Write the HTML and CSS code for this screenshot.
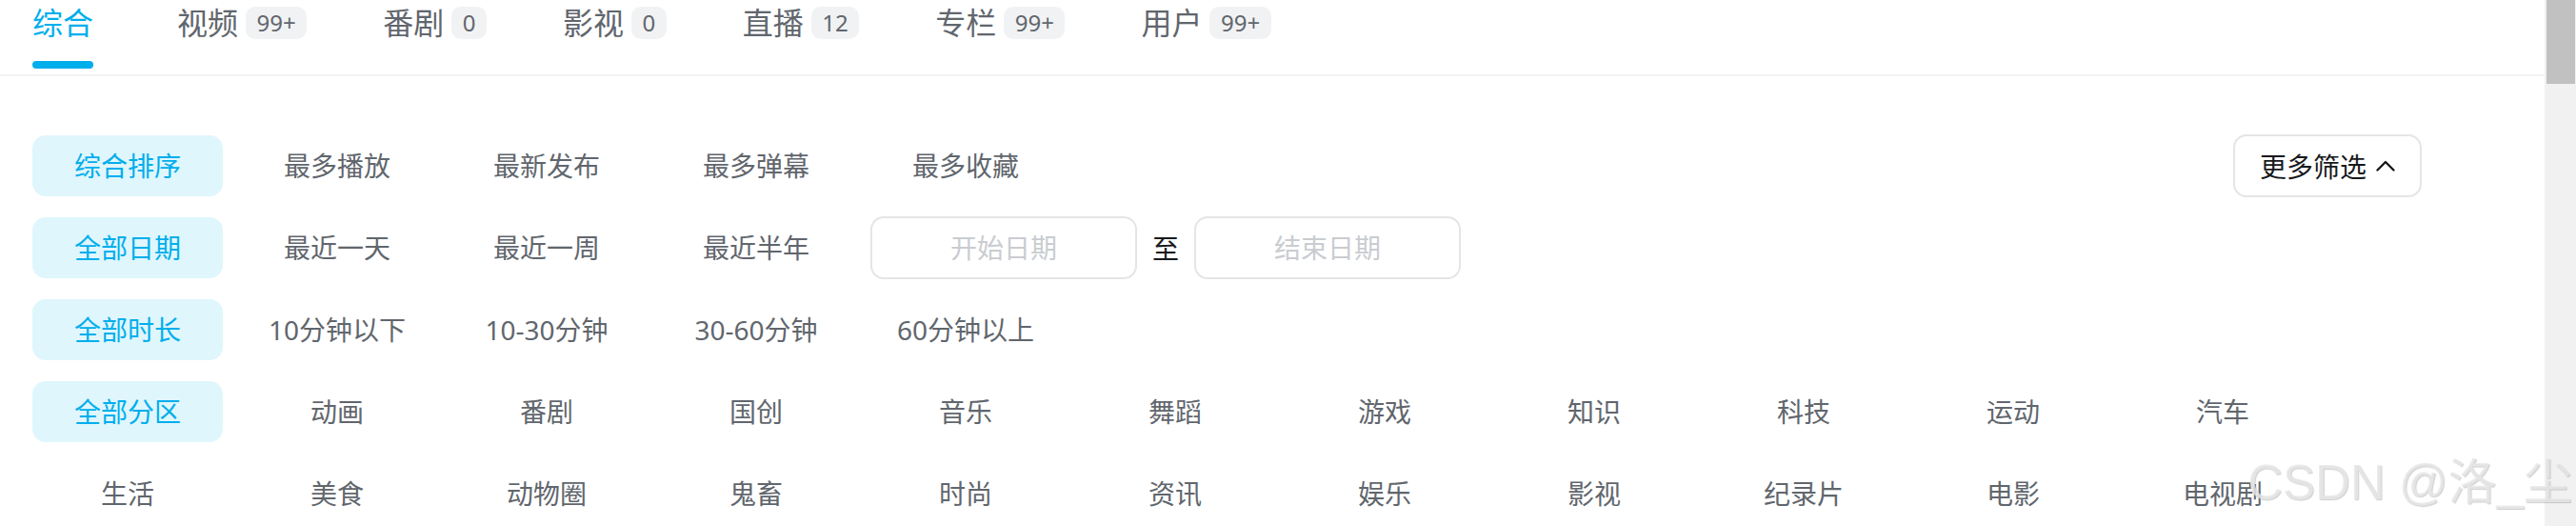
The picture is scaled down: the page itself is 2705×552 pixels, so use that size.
FILE: index.html
```html
<!DOCTYPE html>
<html lang="zh-CN">
<head>
    <meta charset="UTF-8">
    <meta name="viewport" content="width=device-width, initial-scale=1.0">
    <title>搜索结果</title>
    <link rel="stylesheet" href="styles.css">
</head>
<body>
    <div class="page">
        <!-- search type tabs -->
        <nav class="tabs">
            <div class="tab active">
                <div class="tab-label"><span class="tab-name">综合</span></div>
                <i class="tab-bar"></i>
            </div>
            <div class="tab">
                <div class="tab-label"><span class="tab-name">视频</span><span class="badge">99+</span></div>
            </div>
            <div class="tab">
                <div class="tab-label"><span class="tab-name">番剧</span><span class="badge">0</span></div>
            </div>
            <div class="tab">
                <div class="tab-label"><span class="tab-name">影视</span><span class="badge">0</span></div>
            </div>
            <div class="tab">
                <div class="tab-label"><span class="tab-name">直播</span><span class="badge">12</span></div>
            </div>
            <div class="tab">
                <div class="tab-label"><span class="tab-name">专栏</span><span class="badge">99+</span></div>
            </div>
            <div class="tab">
                <div class="tab-label"><span class="tab-name">用户</span><span class="badge">99+</span></div>
            </div>
        </nav>

        <!-- filter conditions -->
        <div class="filters">
            <div class="filter-row">
                <span class="opt on">综合排序</span>
                <span class="opt">最多播放</span>
                <span class="opt">最新发布</span>
                <span class="opt">最多弹幕</span>
                <span class="opt">最多收藏</span>
                <div class="more">
                    <span>更多筛选</span>
                    <svg class="chevron" width="20" height="12" viewBox="0 0 20 12">
                        <polyline points="1.5,10.5 10,2 18.5,10.5" fill="none" stroke="#18191c" stroke-width="2.4" stroke-linecap="round" stroke-linejoin="round"/>
                    </svg>
                </div>
            </div>
            <div class="filter-row">
                <span class="opt on">全部日期</span>
                <span class="opt">最近一天</span>
                <span class="opt">最近一周</span>
                <span class="opt">最近半年</span>
                <div class="date-range">
                    <input class="date-input" type="text" placeholder="开始日期">
                    <span class="to">至</span>
                    <input class="date-input" type="text" placeholder="结束日期">
                </div>
            </div>
            <div class="filter-row">
                <span class="opt on">全部时长</span>
                <span class="opt">10分钟以下</span>
                <span class="opt">10-30分钟</span>
                <span class="opt">30-60分钟</span>
                <span class="opt">60分钟以上</span>
            </div>
            <div class="filter-row wrap">
                <span class="opt on">全部分区</span>
                <span class="opt">动画</span>
                <span class="opt">番剧</span>
                <span class="opt">国创</span>
                <span class="opt">音乐</span>
                <span class="opt">舞蹈</span>
                <span class="opt">游戏</span>
                <span class="opt">知识</span>
                <span class="opt">科技</span>
                <span class="opt">运动</span>
                <span class="opt">汽车</span>
                <span class="opt">生活</span>
                <span class="opt">美食</span>
                <span class="opt">动物圈</span>
                <span class="opt">鬼畜</span>
                <span class="opt">时尚</span>
                <span class="opt">资讯</span>
                <span class="opt">娱乐</span>
                <span class="opt">影视</span>
                <span class="opt">纪录片</span>
                <span class="opt">电影</span>
                <span class="opt">电视剧</span>
            </div>
        </div>
    </div>

    <div class="scrollbar"><div class="thumb"></div></div>

    <div class="watermark">CSDN @洛_尘</div>
</body>
</html>
```

FILE: styles.css
```css
body {
    margin: 0;
    display: flex;
    height: 552px;
    overflow: hidden;
    position: relative;
    background-color: #fff;
    font-family: "Noto Sans", "Noto Sans CJK SC", sans-serif;
    color: #61666d;
}

.page {
    flex: 1;
    min-width: 0;
}

/* tabs */
.tabs {
    display: flex;
    gap: 80px;
    height: 78px;
    padding-left: 34px;
    border-bottom: 2px solid #f1f2f3;
}

.tab {
    display: flex;
    flex-direction: column;
}

.tab.active {
    margin-right: 8px;
}

.tab-label {
    display: flex;
    align-items: center;
    gap: 8px;
    height: 48px;
}

.tab-name {
    font-size: 32px;
    line-height: 48px;
    color: #61666d;
}

.tab.active .tab-name {
    color: #00aeec;
}

.tab-bar {
    display: block;
    height: 8px;
    margin-top: 16px;
    border-radius: 4px;
    background-color: #00aeec;
}

.badge {
    height: 34px;
    line-height: 34px;
    padding: 0 11.5px;
    border-radius: 10px;
    background-color: #f1f2f3;
    font-size: 24px;
    color: #61666d;
}

/* filters */
.filters {
    margin-top: 62px;
    padding: 0 129px 0 34px;
}

.filter-row {
    display: flex;
    align-items: center;
    gap: 20px;
    height: 64px;
    margin-bottom: 22px;
}

.filter-row.wrap {
    flex-wrap: wrap;
    row-gap: 22px;
    height: auto;
}

.opt {
    flex-shrink: 0;
    width: 200px;
    height: 64px;
    line-height: 64px;
    border-radius: 14px;
    text-align: center;
    font-size: 28px;
    color: #61666d;
}

.opt.on {
    background-color: #dff6fd;
    color: #00aeec;
}

.more {
    margin-left: auto;
    flex-shrink: 0;
    box-sizing: border-box;
    width: 198px;
    height: 66px;
    border: 2px solid #e3e5e7;
    border-radius: 14px;
    display: flex;
    align-items: center;
    justify-content: center;
    gap: 10px;
    font-size: 28px;
    color: #18191c;
}

.chevron {
    display: block;
}

.date-range {
    display: flex;
    align-items: center;
    gap: 16px;
}

.date-input {
    box-sizing: border-box;
    width: 280px;
    height: 66px;
    margin: 0;
    padding: 0;
    border: 2px solid #e3e5e7;
    border-radius: 14px;
    outline: none;
    text-align: center;
    font-family: inherit;
    font-size: 28px;
    color: #18191c;
    background: #fff;
}

.date-input::placeholder {
    color: #c9ccd0;
}

.to {
    font-size: 28px;
    color: #18191c;
}

/* fake scrollbar */
.scrollbar {
    flex-shrink: 0;
    width: 33px;
    box-sizing: border-box;
    padding: 0 1px 0 2px;
    background-color: #f1f1f1;
}

.thumb {
    height: 88px;
    background-color: #c1c1c1;
}

/* watermark over the page */
.watermark {
    position: absolute;
    right: 4px;
    bottom: 20px;
    font-family: "Liberation Sans", "Noto Sans CJK SC", sans-serif;
    font-size: 51px;
    line-height: 51px;
    white-space: nowrap;
    color: rgba(232, 232, 232, 0.8);
    text-shadow: 1px 1px 1px rgba(120, 120, 120, 0.35);
}
```
